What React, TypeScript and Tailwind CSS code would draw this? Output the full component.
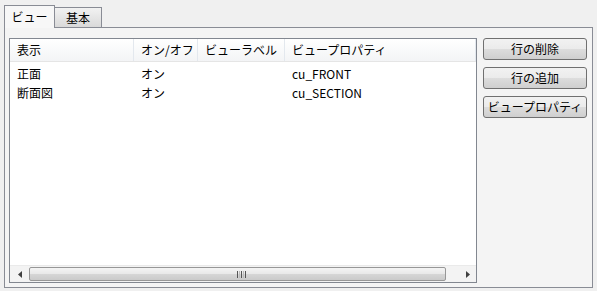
import React from "react";

const columns = [
  { id: 1, label: "表示", width: "w-[124px]" },
  { id: 2, label: "オン/オフ", width: "w-[64px]" },
  { id: 3, label: "ビューラベル", width: "w-[87px]" },
  { id: 4, label: "ビュープロパティ", width: "flex-1" },
];

const rows = [
  { id: 1, name: "正面", on: "オン", label: "", prop: "cu_FRONT" },
  { id: 2, name: "断面図", on: "オン", label: "", prop: "cu_SECTION" },
];

const buttons = ["行の削除", "行の追加", "ビュープロパティ"];

const Button = ({ label }: { label: string }) => (
  <button className="h-[22px] w-[104px] rounded-[3px] border border-[#707070] bg-[linear-gradient(#f2f2f2_0%,#ebebeb_50%,#dddddd_50%,#cfcfcf_100%)] text-[12px] leading-none text-[#000] whitespace-nowrap">
    {label}
  </button>
);

const ScrollBar = () => (
  <div className="flex h-[17px] items-stretch bg-[#f3f3f3] border-t border-[#eaeaea]">
    <div className="flex w-[19px] items-center justify-center">
      <svg width="4" height="7" viewBox="0 0 4 7">
        <path d="M4 0 L0 3.5 L4 7 Z" fill="#404040" />
      </svg>
    </div>
    <div className="flex-1 flex items-stretch py-[1px] pr-[13px]">
      <div className="flex w-full items-center justify-center rounded-[2px] border border-[#979797] bg-[linear-gradient(#f4f4f4_0%,#e8e8e8_50%,#d6d6d6_51%,#cacaca_100%)] pl-[8px]">
        <div className="flex gap-[1px]">
          <div className="h-[7px] w-[1px] bg-[#555]" />
          <div className="h-[7px] w-[1px] bg-[#bbb]" />
          <div className="h-[7px] w-[1px] bg-[#555]" />
          <div className="h-[7px] w-[1px] bg-[#bbb]" />
          <div className="h-[7px] w-[1px] bg-[#555]" />
        </div>
      </div>
    </div>
    <div className="flex w-[17px] items-center justify-center">
      <svg width="4" height="7" viewBox="0 0 4 7">
        <path d="M0 0 L4 3.5 L0 7 Z" fill="#404040" />
      </svg>
    </div>
  </div>
);

export default function App() {
  return (
    <div
      className="w-[597px] h-[291px] bg-[#f0f0f0] px-[4px] pt-[5px] text-[12px] text-[#000]"
      style={{ fontFamily: '"Noto Sans CJK JP", "Noto Sans", sans-serif' }}
    >
      <div className="flex h-[22px] items-end">
        <div className="relative z-10 flex h-[23px] w-[51px] items-center justify-center border border-b-0 border-[#898c95] bg-[#f7f7f7] -mb-[1px]">
          ビュー
        </div>
        <div className="flex h-[20px] w-[47px] items-center justify-center border border-l-0 border-b-0 border-[#898c95] bg-[linear-gradient(#f2f2f2,#d9d9d9)]">
          基本
        </div>
      </div>
      <div className="flex h-[261px] border border-[#898c95] bg-[#f4f4f4] pt-[10px] pb-[4px] pl-[4px] pr-[5px]">
        <div className="flex w-[468px] flex-col border border-[#828790] bg-white">
          <div className="flex h-[23px] items-stretch border-b border-[#e5e5e5] bg-[linear-gradient(#ffffff,#f3f4f6)]">
            {columns.map((c) => (
              <div
                key={c.id}
                className={`${c.width} flex items-center border-r border-[#e3e8ee] pl-[7px] whitespace-nowrap`}
              >
                {c.label}
              </div>
            ))}
          </div>
          <div className="flex-1 pt-[2px]">
            {rows.map((r) => (
              <div key={r.id} className="flex h-[19px] items-center whitespace-nowrap">
                <div className="w-[124px] pl-[7px]">{r.name}</div>
                <div className="w-[64px] pl-[7px]">{r.on}</div>
                <div className="w-[87px] pl-[7px]">{r.label}</div>
                <div className="flex-1 pl-[7px]">{r.prop}</div>
              </div>
            ))}
          </div>
          <ScrollBar />
        </div>
        <div className="ml-[6px] flex flex-col gap-[7px]">
          {buttons.map((b) => (
            <Button key={b} label={b} />
          ))}
        </div>
      </div>
    </div>
  );
}
